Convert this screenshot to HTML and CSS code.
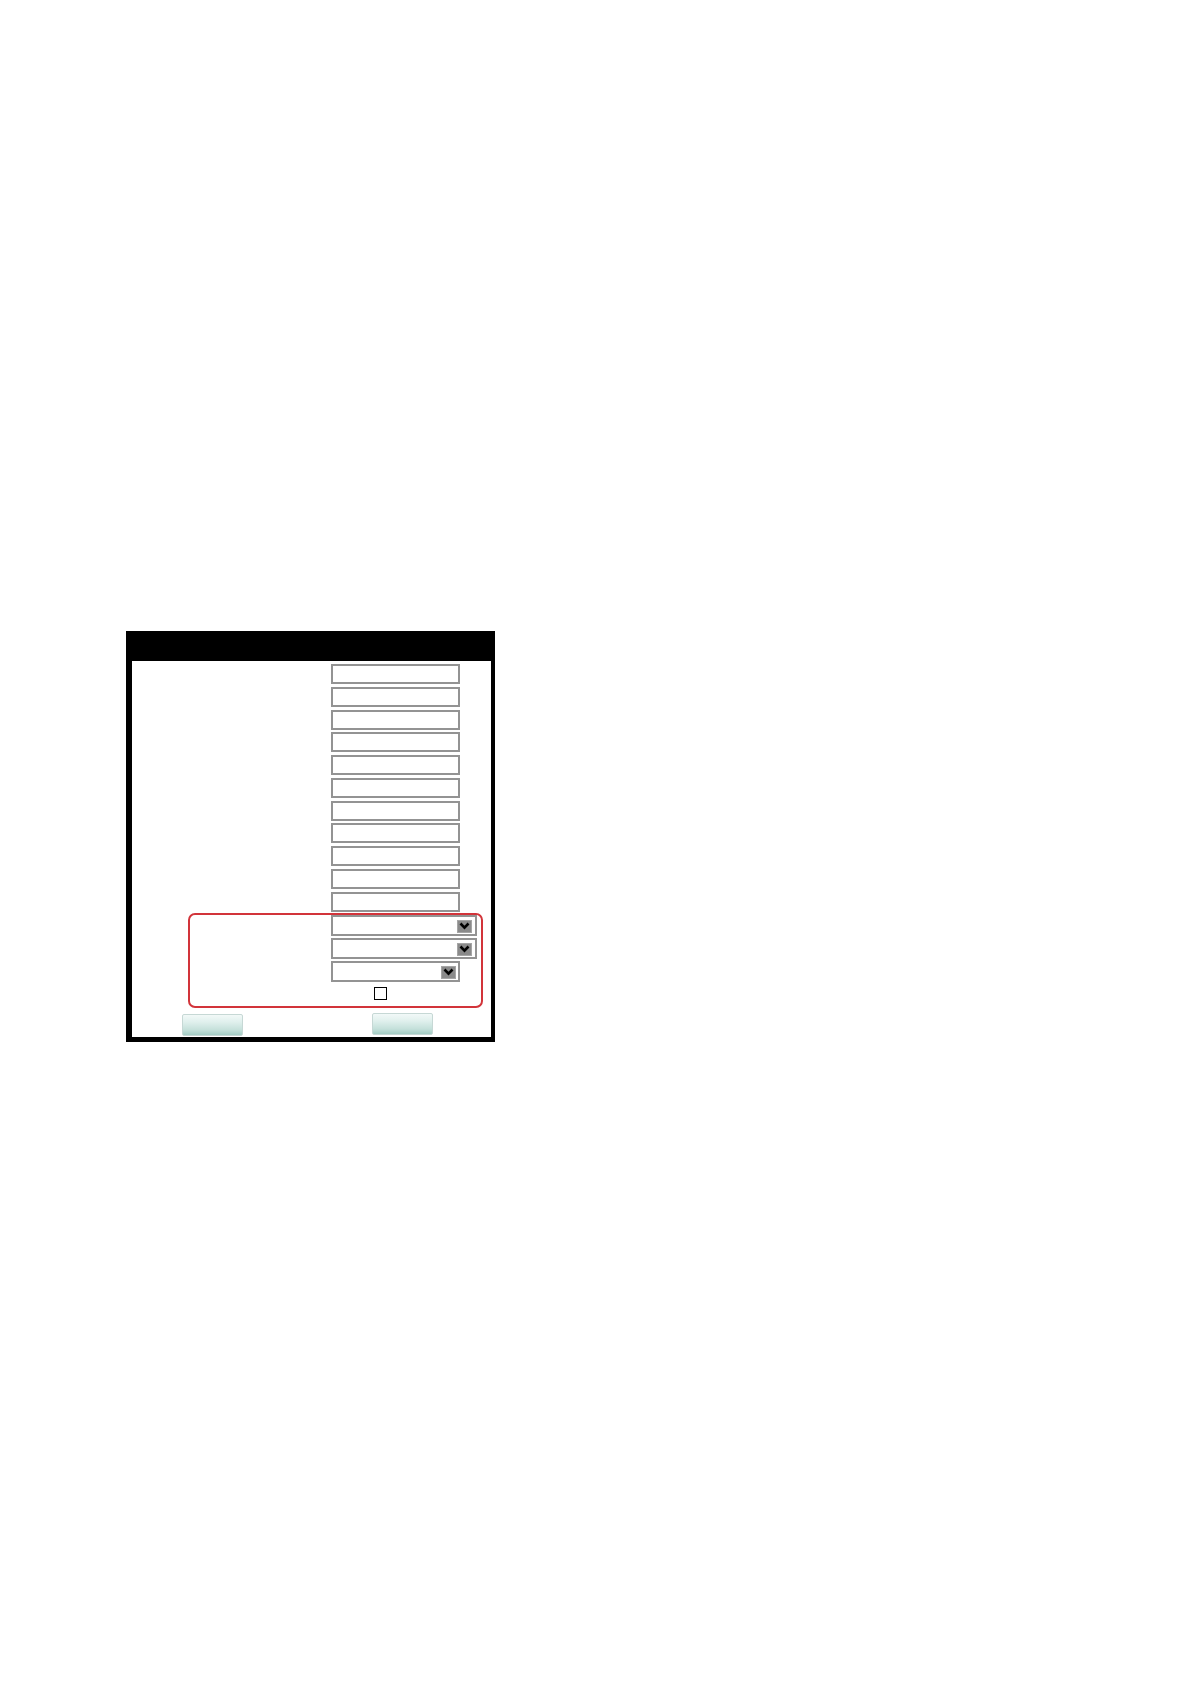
FILE: index.html
```html
<!DOCTYPE html>
<html>
<head>
<meta charset="utf-8">
<link rel="stylesheet" href="styles.css">
</head>
<body>
<div class="panel">
  <div class="panel-head"></div>
  <div class="panel-body">
    <div class="fields">
      <div class="field"></div>
      <div class="field"></div>
      <div class="field"></div>
      <div class="field"></div>
      <div class="field"></div>
      <div class="field"></div>
      <div class="field"></div>
      <div class="field"></div>
      <div class="field"></div>
      <div class="field"></div>
      <div class="field"></div>
    </div>
    <div class="group">
      <div class="select wide"><span class="arrow"><svg width="11" height="8" viewBox="0 0 11 8"><path d="M1.5 1.5 L5.5 5.6 L9.5 1.5" fill="none" stroke="#000" stroke-width="2.6"/></svg></span></div>
      <div class="select wide"><span class="arrow"><svg width="11" height="8" viewBox="0 0 11 8"><path d="M1.5 1.5 L5.5 5.6 L9.5 1.5" fill="none" stroke="#000" stroke-width="2.6"/></svg></span></div>
      <div class="select"><span class="arrow"><svg width="11" height="8" viewBox="0 0 11 8"><path d="M1.5 1.5 L5.5 5.6 L9.5 1.5" fill="none" stroke="#000" stroke-width="2.6"/></svg></span></div>
      <div class="check"></div>
    </div>
    <div class="buttons">
      <div class="btn btn-left"></div>
      <div class="btn btn-right"></div>
    </div>
  </div>
</div>
</body>
</html>
```

FILE: styles.css
```css
html, body {
  margin: 0;
  padding: 0;
  background: #fff;
  font-family: "Liberation Sans", Arial, sans-serif;
}
.panel {
  margin: 631px 0 0 126px;
  width: 369px;
  height: 411px;
  box-sizing: border-box;
  background: #000;
  padding: 0 4px 5px 6px;
  display: flex;
  flex-direction: column;
}
.panel-head {
  height: 30px;
  flex: none;
}
.panel-body {
  flex: 1;
  background: #fff;
  width: 359px;
}
.fields {
  padding: 3px 0 0 199px;
  display: flex;
  flex-direction: column;
  gap: 2.77px;
}
.field {
  width: 129px;
  height: 20px;
  box-sizing: border-box;
  border: 2px solid #939393;
  background: #fff;
}
.group {
  margin: 1px 0 0 56px;
  width: 295px;
  height: 95px;
  box-sizing: border-box;
  border: 2px solid #d2343a;
  border-radius: 7px;
  padding: 0 0 0 141px;
  display: flex;
  flex-direction: column;
}
.select {
  width: 129px;
  height: 21px;
  box-sizing: border-box;
  border: 2px solid #939393;
  display: flex;
  justify-content: flex-end;
  align-items: flex-end;
  padding: 0 2px 1px 0;
  margin-bottom: 2px;
}
.select.wide {
  width: 146px;
  padding-right: 3px;
}
.arrow {
  width: 15px;
  height: 13px;
  box-sizing: border-box;
  background: #8a8a8a;
  border: 1px solid #a5a5a5;
  display: flex;
  align-items: center;
  justify-content: center;
}
.arrow svg {
  display: block;
}
.check {
  margin: 3px 0 0 43px;
  width: 13px;
  height: 13px;
  box-sizing: border-box;
  border: 1.5px solid #000;
}
.buttons {
  display: flex;
  align-items: flex-start;
  padding: 5px 0 0 50px;
}
.btn {
  width: 61px;
  height: 22px;
  box-sizing: border-box;
  border: 1px solid #c6d8d5;
  border-radius: 2px;
  background: linear-gradient(#f2f9f8 0%, #e0f0ed 35%, #c4e0da 75%, #a3ccc4 100%);
}
.btn-left {
  margin-top: 1px;
}
.btn-right {
  margin-left: 129px;
}
```
